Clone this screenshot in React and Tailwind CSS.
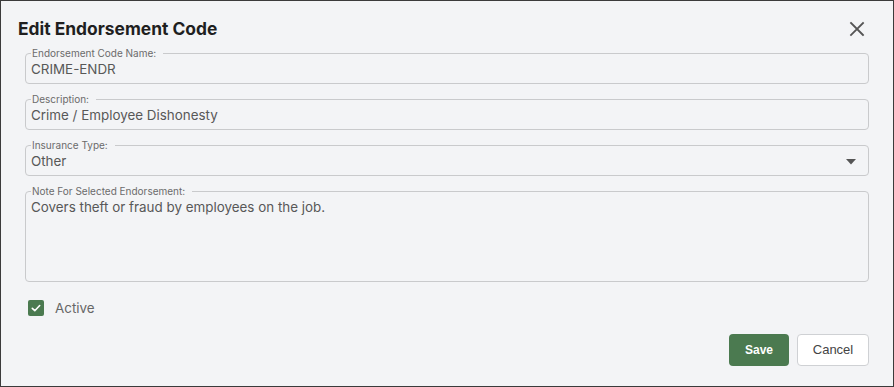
import React from "react";

const font = { fontFamily: "Inter, 'Noto Sans', sans-serif" };

function Field({ label, children, className = "" }) {
  return (
    <fieldset className={"rounded-[4px] border border-[#c9cacc] px-[5px] " + className}>
      <legend className="pl-[1px] pr-[7px] text-[10px] leading-[12px] text-[#6b6b6b]">{label}</legend>
      {children}
    </fieldset>
  );
}

export default function App() {
  return (
    <div
      className="box-border flex h-[387px] w-[894px] flex-col border border-[#3b3b3b] bg-[#f3f4f6] text-[#585858]"
      style={font}
    >
      <div className="flex items-center justify-between pl-[17px] pr-[24px] pt-[16px]">
        <h1 className="text-[17.4px] font-bold leading-[24px] text-[#1f1f1f]">Edit Endorsement Code</h1>
        <button className="flex h-[24px] w-[24px] items-center justify-center text-[#555]">
          <svg width="16" height="16" viewBox="0 0 16 16" fill="none" stroke="currentColor" strokeWidth="1.8" strokeLinecap="square">
            <path d="M2 2 L14 14 M14 2 L2 14" />
          </svg>
        </button>
      </div>

      <div className="mt-[6px] flex flex-col gap-[9px] px-6">
        <Field label="Endorsement Code Name:">
          <input
            readOnly
            value="CRIME-ENDR"
            className="block h-[20px] w-full bg-transparent text-[13.4px] leading-[20px] text-[#585858] outline-none"
          />
          <div className="h-[4px]" />
        </Field>
        <Field label="Description:">
          <input
            readOnly
            value="Crime / Employee Dishonesty"
            className="block h-[20px] w-full bg-transparent text-[13.4px] leading-[20px] text-[#585858] outline-none"
          />
          <div className="h-[4px]" />
        </Field>
        <Field label="Insurance Type:">
          <div className="flex h-[20px] items-center justify-between pr-[7px]">
            <span className="text-[13.4px] leading-[20px] text-[#585858]">Other</span>
            <svg width="10" height="6" viewBox="0 0 10 6" className="mt-[2px]">
              <path d="M0 0 H10 L5 5.5 Z" fill="#555" />
            </svg>
          </div>
          <div className="h-[4px]" />
        </Field>
        <Field label="Note For Selected Endorsement:">
          <textarea
            readOnly
            value="Covers theft or fraud by employees on the job."
            className="block h-[84px] w-full resize-none bg-transparent text-[13.4px] leading-[20px] text-[#585858] outline-none"
          />
        </Field>
      </div>

      <label className="ml-[27px] mt-[16px] flex items-center gap-[11px]">
        <span className="flex h-[16px] w-[16px] items-center justify-center rounded-[2px] bg-[#4b7a50]">
          <svg width="12" height="12" viewBox="0 0 12 12" fill="none" stroke="white" strokeWidth="1.6" strokeLinecap="round" strokeLinejoin="round">
            <path d="M2.3 6.3 L4.8 8.7 L9.7 3.5" />
          </svg>
        </span>
        <span className="text-[13.4px] leading-[20px] text-[#666]">Active</span>
      </label>

      <div className="mt-auto mb-[20px] flex justify-end gap-[8px] px-6" style={{ fontFamily: "'Liberation Sans', Arial, sans-serif" }}>
        <button className="h-[32px] w-[60px] rounded-[4px] bg-[#4b7a50] text-[12px] font-bold text-white">Save</button>
        <button className="h-[32px] w-[72px] rounded-[4px] border border-[#cfd1d4] bg-white text-[13px] text-[#444]">Cancel</button>
      </div>
    </div>
  );
}
